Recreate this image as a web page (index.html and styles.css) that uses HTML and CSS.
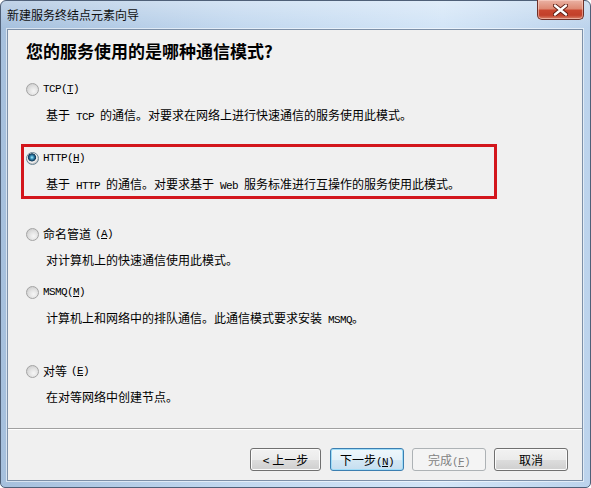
FILE: index.html
```html
<!DOCTYPE html>
<html lang="zh-CN">

<head>
    <meta charset="UTF-8" />
    <title>新建服务终结点元素向导</title>
    <link rel="stylesheet" href="styles.css">
</head>

<body>
    <div class="window">
        <div class="titlebar">
            <span class="title">新建服务终结点元素向导</span>
            <button class="close" title="关闭">
                <svg width="15" height="12" viewBox="0 0 15 12">
                    <path d="M2 1.5 L13 10.5 M13 1.5 L2 10.5" stroke="#5a1a10" stroke-width="4.2" stroke-linecap="round" />
                    <path d="M2 1.5 L13 10.5 M13 1.5 L2 10.5" stroke="#ffffff" stroke-width="2.4" stroke-linecap="round" />
                </svg>
            </button>
        </div>

        <div class="client">
            <h1 class="heading">您的服务使用的是哪种通信模式?</h1>

            <div class="options">
                <div class="option">
                    <div class="option-label"><span class="radio"></span><span class="en">TCP(<u>T</u>)</span></div>
                    <div class="option-desc">基于<span class="en"> TCP </span>的通信。对要求在网络上进行快速通信的服务使用此模式。</div>
                </div>
                <div class="option marked">
                    <div class="option-label"><span class="radio checked"></span><span class="en">HTTP(<u>H</u>)</span></div>
                    <div class="option-desc">基于<span class="en"> HTTP </span>的通信。对要求基于<span class="en"> Web </span>服务标准进行互操作的服务使用此模式。</div>
                </div>
                <div class="option">
                    <div class="option-label"><span class="radio"></span>命名管道<span class="en">(<u>A</u>)</span></div>
                    <div class="option-desc">对计算机上的快速通信使用此模式。</div>
                </div>
                <div class="option">
                    <div class="option-label"><span class="radio"></span><span class="en">MSMQ(<u>M</u>)</span></div>
                    <div class="option-desc">计算机上和网络中的排队通信。此通信模式要求安装<span class="en"> MSMQ</span>。</div>
                </div>
                <div class="option">
                    <div class="option-label"><span class="radio"></span>对等<span class="en">(<u>E</u>)</span></div>
                    <div class="option-desc">在对等网络中创建节点。</div>
                </div>
            </div>

            <div class="footer">
                <div class="separator"></div>
                <div class="buttons">
                    <button class="btn btn-back">&lt; 上一步</button>
                    <button class="btn default">下一步<span class="en">(<u>N</u>)</span></button>
                    <button class="btn" disabled>完成<span class="en">(<u>F</u>)</span></button>
                    <button class="btn">取消</button>
                </div>
            </div>
        </div>
    </div>
</body>

</html>
```

FILE: styles.css
```css
body {
    margin: 0;
    background: #ffffff;
    font-family: "Noto Sans CJK SC", sans-serif;
    font-size: 12px;
    color: #000;
}

.window {
    width: 591px;
    height: 488px;
    box-sizing: border-box;
    border: 1px solid #4f6078;
    border-radius: 6px 6px 5px 5px;
    padding: 0 7px 6px 6px;
    display: flex;
    flex-direction: column;
    background:
        linear-gradient(180deg, rgba(255, 255, 255, 0.3) 0, rgba(255, 255, 255, 0) 27px),
        linear-gradient(90deg, #a6c0dd 0, #c2d8ef 40%, #d3e5f7 75%, #bcd3ec 100%);
}

.titlebar {
    height: 28px;
    display: flex;
    align-items: flex-start;
}

.title {
    margin-top: 6px;
    line-height: 16px;
    color: #101010;
}

.close {
    margin-left: auto;
    margin-right: -1px;
    margin-top: -1px;
    width: 47px;
    height: 20px;
    padding: 0;
    border: 1px solid #6e3028;
    border-top: none;
    border-radius: 0 0 5px 5px;
    background: linear-gradient(180deg, #eab2a4 0, #de8a74 45%, #c9462f 55%, #c2402a 80%, #d9826a 100%);
    box-shadow: inset 0 0 0 1px rgba(255, 220, 210, 0.5);
    display: flex;
    align-items: center;
    justify-content: center;
}

.client {
    flex: 1;
    display: flex;
    flex-direction: column;
    background: #f0f0f0;
    border: 1px solid #7d90a8;
    box-shadow: 0 0 0 1px rgba(255, 255, 255, 0.55);
}

.heading {
    margin: 9px 0 0 18px;
    font-size: 17px;
    line-height: 24px;
    font-weight: bold;
}

.options {
    flex: 1;
    display: flex;
    flex-direction: column;
    padding-left: 13px;
}

.option {
    width: 476px;
    box-sizing: border-box;
    border: 3px solid transparent;
    padding: 3px 2px 4px;
}

.option:nth-child(1) { margin-top: 12px; }
.option:nth-child(2) { margin-top: 14px; }
.option:nth-child(3) { margin-top: 21px; }
.option:nth-child(4) { margin-top: 3px; }
.option:nth-child(5) { margin-top: 24px; }

.option.marked {
    border-color: #d3161c;
}

.option-label {
    display: flex;
    align-items: center;
    gap: 4px;
    height: 16px;
    line-height: 16px;
}

.option-desc {
    margin-top: 10px;
    padding-left: 20px;
    height: 16px;
    line-height: 16px;
    white-space: nowrap;
}

.en {
    font-family: "Liberation Mono", monospace;
    font-size: 11px;
    letter-spacing: -0.6px;
}

.radio {
    width: 13px;
    height: 13px;
    box-sizing: border-box;
    border-radius: 50%;
    border: 1px solid #a3a3a3;
    background: radial-gradient(circle at 60% 65%, #f6f6f6 0, #e2e2e2 45%, #c4c4c4 100%);
    flex: none;
}

.radio.checked {
    border-color: #6a8494;
    background: radial-gradient(circle at 45% 40%, #b4ecfa 0, #48a5cc 1.4px, #1f5a80 2.8px, #123a58 3.8px, #dcdcdc 4.3px, #f4f4f4 5px, #c8c8c8 6px);
}

.footer {
    padding-bottom: 9px;
}

.separator {
    height: 1px;
    background: #a0a0a0;
    border-bottom: 1px solid #ffffff;
}

.buttons {
    margin-top: 18px;
    display: flex;
    justify-content: flex-end;
    gap: 8px;
    padding-right: 14px;
}

.btn {
    width: 74px;
    height: 23px;
    box-sizing: border-box;
    padding: 0;
    border: 1px solid #707070;
    border-radius: 3px;
    background: linear-gradient(180deg, #f2f2f2 0, #ebebeb 50%, #dddddd 51%, #cfcfcf 100%);
    box-shadow: inset 0 0 0 1px #fbfbfb;
    font-family: "Noto Sans CJK SC", sans-serif;
    font-size: 12px;
    color: #000;
}

.btn-back {
    width: 71px;
    margin-right: 1px;
}

.btn.default {
    border-color: #3c7fb1;
    box-shadow: inset 0 0 0 1px #9fdcf7;
    background: linear-gradient(180deg, #eef7fc 0, #e4f1f9 50%, #d4e8f4 51%, #c6def0 100%);
}

.btn:disabled {
    border-color: #adb2b5;
    background: #f4f4f4;
    box-shadow: none;
    color: #838383;
}
```
